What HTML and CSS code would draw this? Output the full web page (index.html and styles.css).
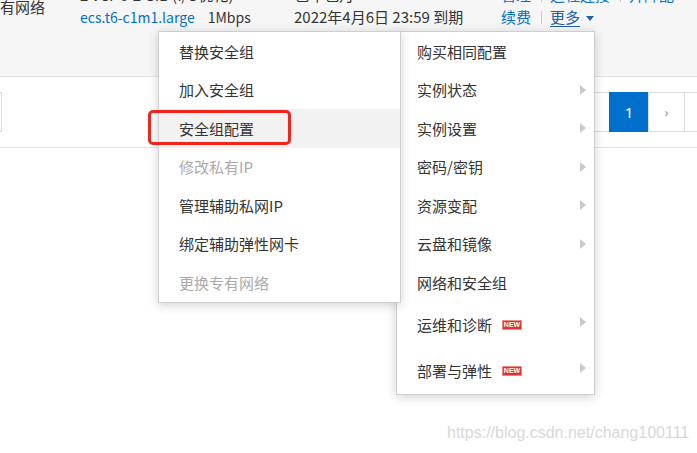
FILE: index.html
```html
<!DOCTYPE html>
<html lang="zh-CN">
<head>
<meta charset="utf-8">
<title>实例列表</title>
<link rel="stylesheet" href="styles.css">
</head>
<body>
<div class="page">
  <div class="row-hover">
    <div class="cells">
      <div class="cell cell-net">专有网络</div>
      <div class="cell cell-spec">
        <div class="line">2 vCPU 2 GiB (I/O优化)</div>
        <div class="line"><a class="link latin">ecs.t6-c1m1.large</a><span class="bw latin">1Mbps</span></div>
      </div>
      <div class="cell cell-pay">
        <div class="line">包年包月</div>
        <div class="line">2022年4月6日 23:59 到期</div>
      </div>
      <div class="cell cell-ops">
        <div class="line"><a class="link">管理</a><span class="sep"></span><a class="link">远程连接</a><span class="sep"></span><a class="link">升降配</a></div>
        <div class="line"><a class="link">续费</a><span class="sep"></span><a class="link more">更多</a><span class="caret"></span></div>
      </div>
    </div>
  </div>
  <div class="pager-bar">
    <div class="select-box"></div>
    <div class="pager">
      <span class="pg">‹</span>
      <span class="pg active">1</span>
      <span class="pg next">›</span>
      <span class="pg goto"></span>
    </div>
  </div>
</div>

<div class="menu menu-main">
  <div class="mi">购买相同配置</div>
  <div class="mi has-sub">实例状态<span class="arrow"></span></div>
  <div class="mi has-sub">实例设置<span class="arrow"></span></div>
  <div class="mi has-sub">密码/密钥<span class="arrow"></span></div>
  <div class="mi has-sub">资源变配<span class="arrow"></span></div>
  <div class="mi has-sub">云盘和镜像<span class="arrow"></span></div>
  <div class="mi">网络和安全组</div>
  <div class="mi tall has-sub">运维和诊断<span class="new">NEW</span><span class="arrow up"></span></div>
  <div class="mi tall has-sub">部署与弹性<span class="new">NEW</span><span class="arrow up"></span></div>
</div>

<div class="menu menu-sub">
  <div class="mi">替换安全组</div>
  <div class="mi">加入安全组</div>
  <div class="mi hover">安全组配置</div>
  <div class="mi disabled">修改私有IP</div>
  <div class="mi">管理辅助私网IP</div>
  <div class="mi">绑定辅助弹性网卡</div>
  <div class="mi disabled">更换专有网络</div>
</div>

<div class="annot"></div>
<div class="watermark">https://blog.csdn.net/chang100111</div>
</body>
</html>
```

FILE: styles.css
```css
html, body {
  margin: 0;
  padding: 0;
  background: #ffffff;
  overflow: hidden;
  width: 697px;
  height: 453px;
}
body {
  font-family: "Noto Sans CJK SC", "Noto Sans", sans-serif;
  font-size: 15px;
  color: #333333;
  position: relative;
}
.page {
  width: 697px;
}
.row-hover {
  height: 76px;
  background: #f6f6f6;
  border-bottom: 1px solid #e3e3e3;
  overflow: hidden;
}
.cells {
  display: flex;
  margin-top: -16px;
  line-height: 22px;
  white-space: nowrap;
}
.cell {
  flex-shrink: 0;
}
.cell-net {
  margin-left: -15px;
  width: 95px;
  padding-top: 12px;
}
.cell-spec {
  width: 214px;
}
.cell-pay {
  width: 207px;
}
.cell-ops {
  flex: 1;
}
.line {
  height: 22px;
  display: flex;
  align-items: center;
}
.latin {
  font-size: 14px;
}
.link {
  color: #0070cc;
  text-decoration: none;
}
.bw {
  margin-left: 13px;
}
.sep {
  display: inline-block;
  width: 1px;
  height: 13px;
  background: #cccccc;
  margin: 0 8px 0 10px;
}
.more {
  color: #22609f;
  text-decoration: underline;
  text-underline-offset: 3px;
}
.caret {
  display: inline-block;
  width: 0;
  height: 0;
  border-left: 4.5px solid transparent;
  border-right: 4.5px solid transparent;
  border-top: 5px solid #22609f;
  margin-left: 6px;
  margin-top: 3px;
}
.pager-bar {
  display: flex;
  padding: 15px 0;
  border-bottom: 1px solid #e3e3e3;
  overflow: hidden;
}
.select-box {
  flex-shrink: 0;
  box-sizing: border-box;
  width: 102px;
  height: 40px;
  margin-left: -100px;
  border: 1px solid #dddddd;
}
.pager {
  display: flex;
  flex-shrink: 0;
  margin-left: 569px;
}
.pg {
  box-sizing: border-box;
  width: 40px;
  height: 40px;
  border: 1px solid #dddddd;
  margin-left: -1px;
  display: flex;
  align-items: center;
  justify-content: center;
  font-family: "Noto Sans", sans-serif;
  font-size: 15px;
  color: #999999;
  flex-shrink: 0;
}
.pg.active {
  background: #0070cc;
  border-color: #0070cc;
  color: #ffffff;
}
.pg.next {
  width: 37px;
  font-size: 13px;
}
.pg.goto {
  width: 13px;
  border-right: none;
}
.menu {
  position: absolute;
  top: 31px;
  background: #ffffff;
  border: 1px solid #cfcfcf;
  box-shadow: 0 2px 10px rgba(0, 0, 0, 0.18);
  box-sizing: border-box;
}
.menu-main {
  left: 396px;
  width: 199px;
  z-index: 1;
}
.menu-sub {
  left: 158px;
  width: 243px;
  z-index: 2;
}
.mi {
  height: 38.5px;
  display: flex;
  align-items: center;
  padding-left: 20px;
  white-space: nowrap;
  position: relative;
}
.mi.tall {
  height: 46px;
}
.mi.hover {
  background: #f2f2f2;
}
.mi.disabled {
  color: #aaaaaa;
}
.arrow {
  position: absolute;
  right: 8px;
  top: 50%;
  margin-top: -5px;
  width: 0;
  height: 0;
  border-left: 6px solid #cacaca;
  border-top: 5px solid transparent;
  border-bottom: 5px solid transparent;
}
.arrow.up {
  margin-top: -8px;
}
.new {
  display: inline-flex;
  align-items: center;
  justify-content: center;
  box-sizing: border-box;
  width: 20px;
  height: 10px;
  margin-left: 10px;
  background: #e0312b;
  border: 1px solid #f08a86;
  color: #ffffff;
  font-family: "Liberation Sans", sans-serif;
  font-weight: bold;
  font-size: 7px;
  line-height: 8px;
  letter-spacing: 0;
}
.annot {
  position: absolute;
  left: 148px;
  top: 110px;
  width: 143px;
  height: 35px;
  box-sizing: border-box;
  border: 3px solid #f2251d;
  border-radius: 5px;
  z-index: 3;
}
.watermark {
  position: absolute;
  left: 447px;
  top: 424px;
  font-family: "Liberation Sans", sans-serif;
  font-size: 16px;
  line-height: 18px;
  color: #d8d8d8;
}
```
